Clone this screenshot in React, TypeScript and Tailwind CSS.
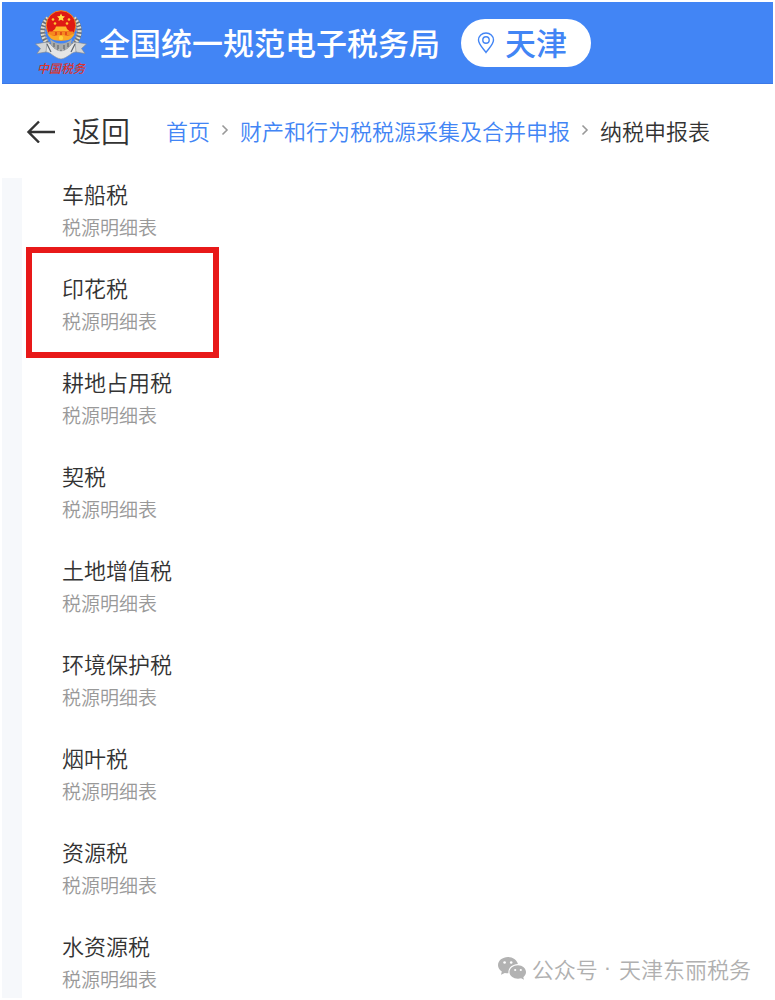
import React from 'react';

interface TaxItem {
    name: string;
    highlighted?: boolean;
}

const taxItems: TaxItem[] = [
    { name: '车船税' },
    { name: '印花税', highlighted: true },
    { name: '耕地占用税' },
    { name: '契税' },
    { name: '土地增值税' },
    { name: '环境保护税' },
    { name: '烟叶税' },
    { name: '资源税' },
    { name: '水资源税' },
];

const TaxEmblem: React.FC = () => (
    <div className="flex flex-col items-center w-[52px] shrink-0">
        <svg viewBox="0 0 52 50" className="w-[52px] h-[50px]" aria-hidden="true">
            {/* Wheat wreath, open at the top */}
            <path d="M13 8 A18.5 18.5 0 1 0 39 8" fill="none" stroke="#6b6f74" strokeWidth="4.5" />
            <path d="M13 8 A18.5 18.5 0 1 0 39 8" fill="none" stroke="#dcdcd2" strokeWidth="4" strokeDasharray="1.8 1.6" />
            <path d="M15 10 A16 16 0 1 0 37 10" fill="none" stroke="#a5a6a2" strokeWidth="1.5" strokeDasharray="1.5 1.5" />
            {/* Gear below the disc */}
            <path d="M15 29 Q26 38 37 29 L35 37 Q26 43 17 37 Z" fill="#a9abab" />
            <path d="M19 33v4M23 35v4M29 35v4M33 33v4" stroke="#63686e" strokeWidth="1.2" />
            {/* Ribbon */}
            <path d="M0.5 34 L12 32 L14 36 L11 42 L2 43.5 L5.5 38.5 Z" fill="#d3d5d6" stroke="#7d858f" strokeWidth="0.6" />
            <path d="M51.5 34 L40 32 L38 36 L41 42 L50 43.5 L46.5 38.5 Z" fill="#d3d5d6" stroke="#7d858f" strokeWidth="0.6" />
            <path d="M12 32 C17 34 18 40 26 41 C34 40 35 34 40 32 L41 42 C36 42 33 48 26 49 C19 48 16 42 11 42 Z" fill="#e4e5e5" stroke="#8b9199" strokeWidth="0.6" />
            <path d="M12 34 L16 42 M40 34 L36 42" stroke="#5f656c" strokeWidth="1.2" />
            {/* Red disc */}
            <circle cx="26" cy="15.5" r="14.8" fill="#df1a14" stroke="#f28a22" strokeWidth="1" />
            <path d="M26 3.5l1.2 2.6 2.8.3-2 1.9.5 2.8-2.5-1.4-2.5 1.4.5-2.8-2-1.9 2.8-.3z" fill="#ffe04a" />
            <g fill="#ffc832">
                <circle cx="18" cy="9.5" r="1.3" />
                <circle cx="34" cy="9.5" r="1.3" />
                <circle cx="20" cy="13.5" r="1.3" />
                <circle cx="32" cy="13.5" r="1.3" />
            </g>
            <path d="M20 19 L21 16.5 H31 L32 19 L35 21.5 H17 Z" fill="#ffb52c" />
            <path d="M14 21.5 H38 V25.5 H14 Z" fill="#f58a1e" />
            <path d="M12 23 Q18 27 23 25 H29 Q34 27 40 23 Q37 30.5 30 30.5 H22 Q15 30.5 12 23 Z" fill="#fba826" />
            <path d="M21 22v3M26 22v3M31 22v3" stroke="#d52a14" strokeWidth="1.2" />
            <circle cx="26" cy="28" r="2.2" fill="#ffd23c" />
        </svg>
        <span className="text-[12px] leading-4 font-medium italic text-[#d8352f] whitespace-nowrap">中国税务</span>
    </div>
);

const IconPin: React.FC = () => (
    <svg viewBox="0 0 18 22" className="w-[18px] h-[22px]" fill="none" stroke="currentColor" strokeWidth="1.4" aria-hidden="true">
        <path d="M9 20.5 C6.5 16.5 1.5 12.5 1.5 8 A7.5 7 0 0 1 16.5 8 C16.5 12.5 11.5 16.5 9 20.5 Z" />
        <circle cx="9" cy="8" r="3.2" />
    </svg>
);

const IconBack: React.FC = () => (
    <svg viewBox="0 0 30 26" className="w-[30px] h-[26px]" fill="none" stroke="currentColor" strokeWidth="2.4" aria-hidden="true">
        <path d="M13 4.5 L2.5 15 L13 25.5 M2.5 15 H29" />
    </svg>
);

const IconChevron: React.FC = () => (
    <svg viewBox="0 0 8 12" className="w-2 h-3 shrink-0" fill="none" stroke="#999999" strokeWidth="1.6" aria-hidden="true">
        <path d="M1.5 1.5 L6 6 L1.5 10.5" />
    </svg>
);

const IconWechat: React.FC = () => (
    <svg viewBox="0 0 28 24" className="w-7 h-6" aria-hidden="true">
        <path d="M10 1 C4.5 1 0 4.6 0 9.2 C0 11.8 1.5 14 3.8 15.5 L3 18.8 L6.8 16.9 C7.8 17.2 9 17.3 10.4 17.3 C10 11.5 14.5 8.2 19.9 8 C18.9 3.9 14.9 1 10 1 Z" fill="#b2b2b2" />
        <path d="M20 9.3 C15.2 9.3 11.5 12.3 11.5 16.1 C11.5 19.9 15.2 22.8 20 22.8 C21.1 22.8 22.2 22.6 23.1 22.3 L26 23.8 L25.3 21.2 C27 19.9 28 18.2 28 16.1 C28 12.3 24.5 9.3 20 9.3 Z" fill="#b2b2b2" />
        <g fill="#fff">
            <circle cx="6.6" cy="6.5" r="1.3" />
            <circle cx="13.2" cy="6.5" r="1.3" />
            <circle cx="17.2" cy="14" r="1.1" />
            <circle cx="22.8" cy="14" r="1.1" />
        </g>
    </svg>
);

const Header: React.FC = () => (
    <header className="flex items-center h-[82px] pl-[33px] bg-[#4285f5] border-b border-[#3b78e7]">
        <TaxEmblem />
        <h1 className="ml-3 pb-0.5 text-[31px] leading-10 font-medium text-white whitespace-nowrap">全国统一规范电子税务局</h1>
        <button className="flex items-center gap-2.5 h-12 ml-[21px] pl-4 pr-6 rounded-full bg-white text-[#4285f5] whitespace-nowrap">
            <IconPin />
            <span className="pb-0.5 text-[31px] leading-10 font-medium">天津</span>
        </button>
    </header>
);

const Breadcrumb: React.FC = () => (
    <div className="flex items-center h-[94px] pl-6 pb-0.5 whitespace-nowrap">
        <button className="flex items-center gap-4 text-[#333333]">
            <IconBack />
            <span className="text-[29px] leading-10 font-[350]">返回</span>
        </button>
        <nav className="flex items-center gap-[11px] ml-9 text-[22px] leading-8 font-[350]">
            <a href="#home" className="text-[#4285f5]">首页</a>
            <IconChevron />
            <a href="#declare" className="text-[#4285f5]">财产和行为税税源采集及合并申报</a>
            <IconChevron />
            <span className="text-[#333333]">纳税申报表</span>
        </nav>
    </div>
);

const TaxList: React.FC = () => (
    <ul className="flex flex-col gap-[31px] pb-[5px] font-[350]">
        {taxItems.map(item => (
            <li key={item.name} className="relative pl-10">
                {item.highlighted && (
                    <div className="absolute left-1 -top-[25px] w-[193px] h-[111px] border-6 border-[#e81919] pointer-events-none"></div>
                )}
                <div className="text-[22px] leading-[30px] text-[#333333]">{item.name}</div>
                <a href="#detail" className="block mt-[5px] text-[19px] leading-7 text-[#999999]">税源明细表</a>
            </li>
        ))}
    </ul>
);

const App: React.FC = () => {
    return (
        <div className="relative p-0.5 bg-white font-['Noto_Sans_CJK_SC',sans-serif]">
            <Header />
            <Breadcrumb />
            <main className="flex">
                <div className="w-5 bg-[#f6f8fb]"></div>
                <div className="flex-1">
                    <TaxList />
                </div>
            </main>

            {/* Account watermark */}
            <div className="absolute right-6 bottom-4 flex items-center text-[22px] leading-8 font-[350] text-[#b0b0b0]">
                <IconWechat />
                <span className="ml-1.5">公众号</span>
                <span className="ml-1.5 mr-2 font-['Liberation_Sans',sans-serif]">·</span>
                <span>天津东丽税务</span>
            </div>
        </div>
    );
};

export default App;
